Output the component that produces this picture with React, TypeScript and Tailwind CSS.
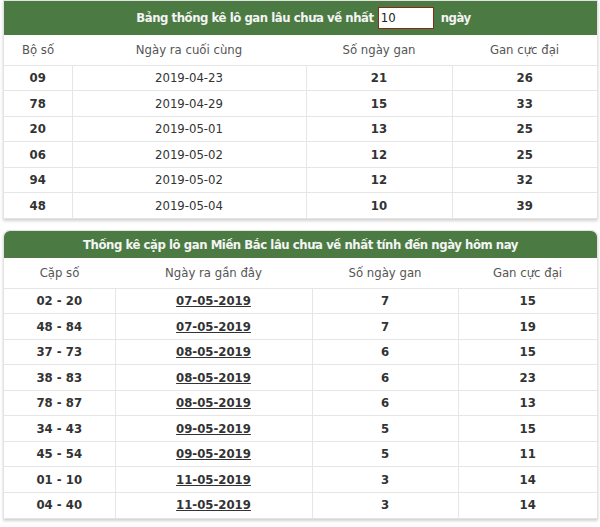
import React from "react";

const t1 = [
  ["09", "2019-04-23", "21", "26"],
  ["78", "2019-04-29", "15", "33"],
  ["20", "2019-05-01", "13", "25"],
  ["06", "2019-05-02", "12", "25"],
  ["94", "2019-05-02", "12", "32"],
  ["48", "2019-05-04", "10", "39"],
];

const t2 = [
  ["02 - 20", "07-05-2019", "7", "15"],
  ["48 - 84", "07-05-2019", "7", "19"],
  ["37 - 73", "08-05-2019", "6", "15"],
  ["38 - 83", "08-05-2019", "6", "23"],
  ["78 - 87", "08-05-2019", "6", "13"],
  ["34 - 43", "09-05-2019", "5", "15"],
  ["45 - 54", "09-05-2019", "5", "11"],
  ["01 - 10", "11-05-2019", "3", "14"],
  ["04 - 40", "11-05-2019", "3", "14"],
];

const font = { fontFamily: '"DejaVu Sans Condensed", "DejaVu Sans", sans-serif' };

export default function App() {
  return (
    <div className="bg-white w-[600px] h-[527px] px-[3px] pr-[2px] text-[13px]" style={font}>
      <div className="border border-[#e3e3e3] shadow-[0_2px_3px_rgba(0,0,0,0.18)]">
        <div className="h-[34px] bg-[#4b7b43] flex items-center justify-center gap-[4px] text-[#f4f4f4] font-bold tracking-[-0.45px] pl-[6px]">
          <span>Bảng thống kê lô gan lâu chưa về nhất</span>
          <div className="w-[56px] h-[22px] bg-white border border-[#8a2a1f] text-[#222] font-normal flex items-center pl-[2px] text-[13px] tracking-normal">10</div>
          <span className="ml-[3px]">ngày</span>
        </div>
        <table className="w-full table-fixed border-collapse">
          <colgroup>
            <col className="w-[68px]" />
            <col className="w-[234px]" />
            <col className="w-[146px]" />
            <col />
          </colgroup>
          <thead>
            <tr className="h-[30px] text-[#555] border-b border-[#e6e6e6]">
              <th className="font-normal">Bộ số</th>
              <th className="font-normal">Ngày ra cuối cùng</th>
              <th className="font-normal">Số ngày gan</th>
              <th className="font-normal">Gan cực đại</th>
            </tr>
          </thead>
          <tbody>
            {t1.map((r, i) => (
              <tr key={i} className={"h-[25.5px] text-[#333] text-center " + (i < t1.length - 1 ? "border-b border-[#e6e6e6]" : "")}>
                <td className="font-bold border-r border-[#e6e6e6]">{r[0]}</td>
                <td className="border-r border-[#e6e6e6]">{r[1]}</td>
                <td className="font-bold border-r border-[#e6e6e6]">{r[2]}</td>
                <td className="font-bold">{r[3]}</td>
              </tr>
            ))}
          </tbody>
        </table>
      </div>

      <div className="mt-[11px] border border-[#e3e3e3] rounded-t-[6px] shadow-[0_2px_3px_rgba(0,0,0,0.18)]">
        <div className="h-[27px] bg-[#4b7b43] rounded-t-[6px] flex items-center justify-center text-[#f4f4f4] font-bold tracking-[-0.45px]">
          Thống kê cặp lô gan Miền Bắc lâu chưa về nhất tính đến ngày hôm nay
        </div>
        <table className="w-full table-fixed border-collapse">
          <colgroup>
            <col className="w-[111px]" />
            <col className="w-[197px]" />
            <col className="w-[146px]" />
            <col />
          </colgroup>
          <thead>
            <tr className="h-[30px] text-[#555] border-b border-[#e6e6e6]">
              <th className="font-normal">Cặp số</th>
              <th className="font-normal">Ngày ra gần đây</th>
              <th className="font-normal">Số ngày gan</th>
              <th className="font-normal">Gan cực đại</th>
            </tr>
          </thead>
          <tbody>
            {t2.map((r, i) => (
              <tr key={i} className={"h-[25.5px] text-[#333] text-center font-bold " + (i < t2.length - 1 ? "border-b border-[#e6e6e6]" : "")}>
                <td className="border-r border-[#e6e6e6]">{r[0]}</td>
                <td className="border-r border-[#e6e6e6]"><a className="underline">{r[1]}</a></td>
                <td className="border-r border-[#e6e6e6]">{r[2]}</td>
                <td>{r[3]}</td>
              </tr>
            ))}
          </tbody>
        </table>
      </div>
    </div>
  );
}
